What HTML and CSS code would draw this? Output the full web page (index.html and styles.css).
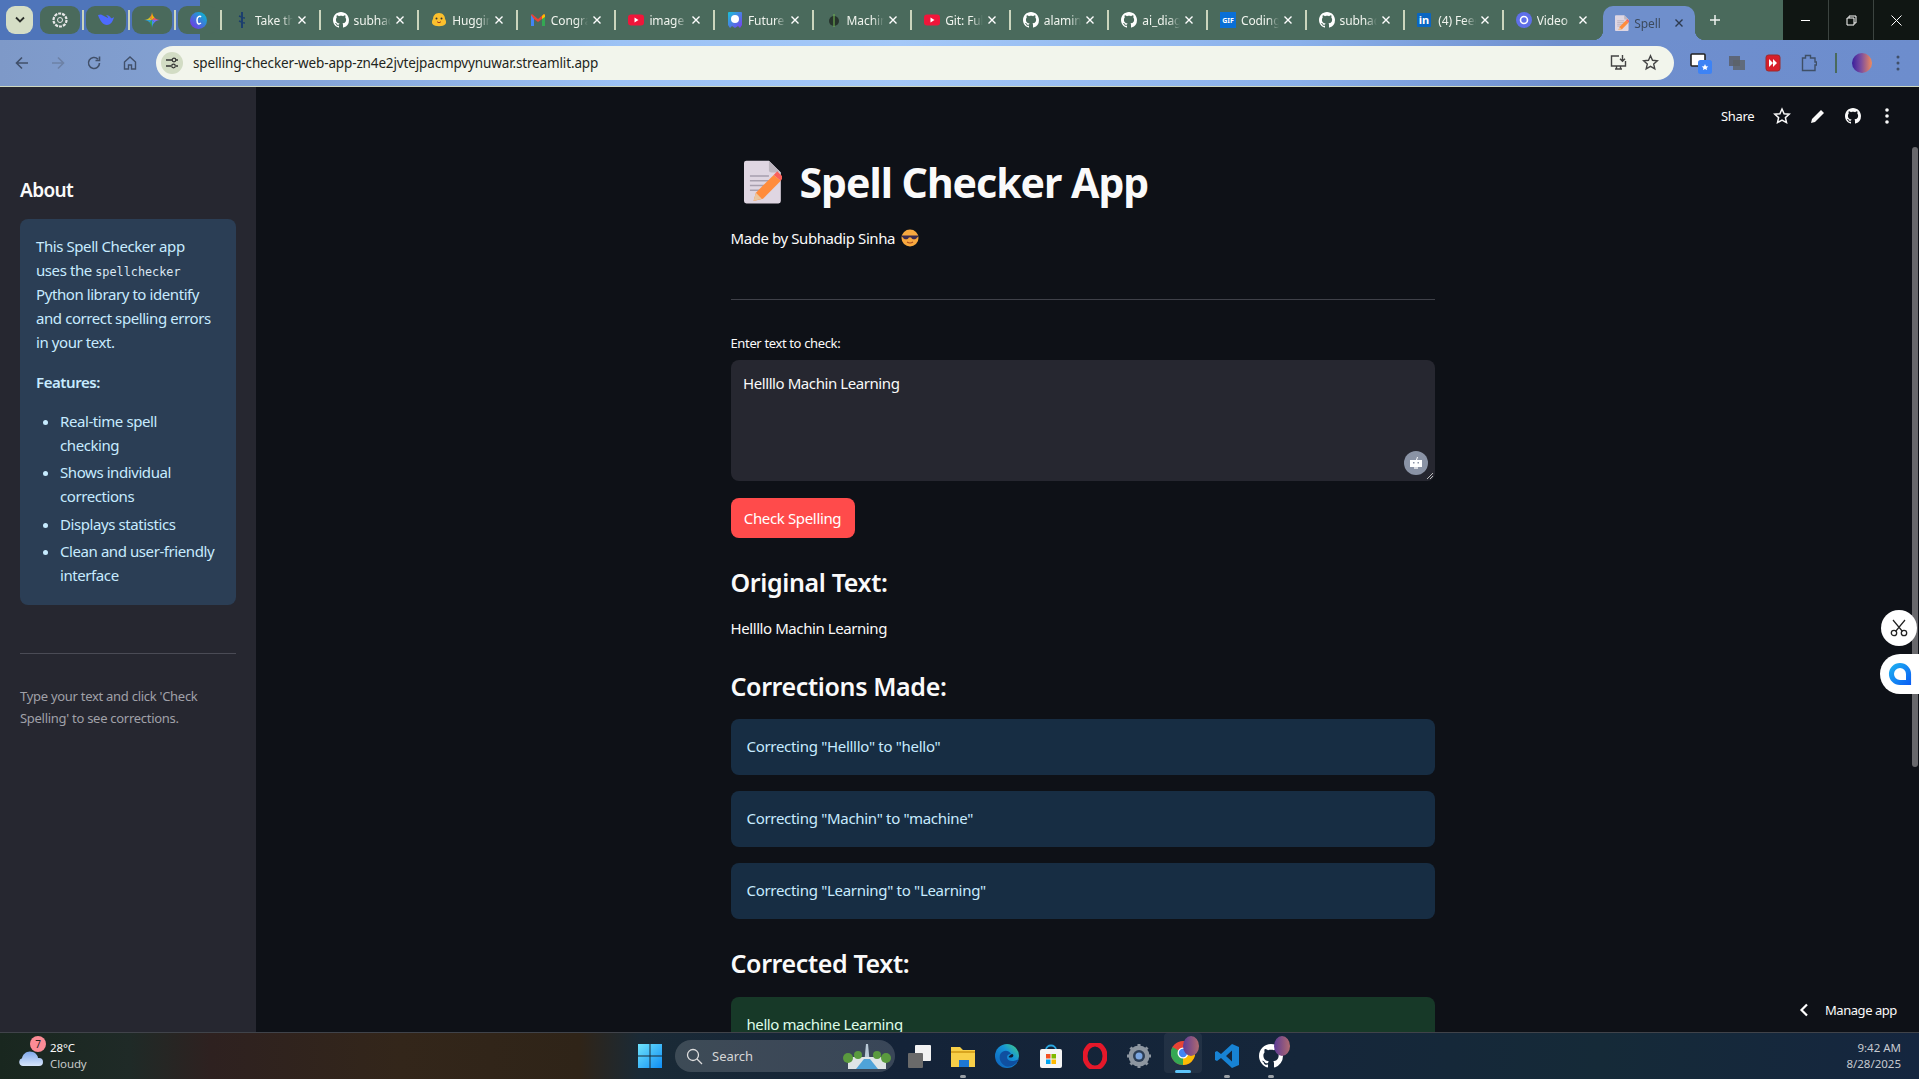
FILE: index.html
```html
<!DOCTYPE html>
<html lang="en">
<head>
<meta charset="utf-8">
<title>Spell Checker App</title>
<link rel="stylesheet" href="styles.css">
</head>
<body>
<svg class="defs" width="0" height="0" aria-hidden="true">
  <defs>
    <symbol id="gh" viewBox="0 0 16 16"><path fill="currentColor" d="M8 0C3.58 0 0 3.58 0 8c0 3.54 2.29 6.53 5.47 7.59.4.07.55-.17.55-.38 0-.19-.01-.82-.01-1.49-2.01.37-2.53-.49-2.69-.94-.09-.23-.48-.94-.82-1.13-.28-.15-.68-.52-.01-.53.63-.01 1.08.58 1.23.82.72 1.21 1.87.87 2.33.66.07-.52.28-.87.51-1.07-1.78-.2-3.64-.89-3.64-3.95 0-.87.31-1.59.82-2.15-.08-.2-.36-1.02.08-2.12 0 0 .67-.21 2.2.82.64-.18 1.32-.27 2-.27.68 0 1.36.09 2 .27 1.53-1.04 2.2-.82 2.2-.82.44 1.1.16 1.92.08 2.12.51.56.82 1.27.82 2.15 0 3.07-1.87 3.75-3.65 3.95.29.25.54.73.54 1.48 0 1.07-.01 1.93-.01 2.2 0 .21.15.46.55.38A8.013 8.013 0 0016 8c0-4.42-3.58-8-8-8z"/></symbol>
    <symbol id="x" viewBox="0 0 10 10"><path d="M1.5 1.5l7 7M8.5 1.5l-7 7" stroke="currentColor" stroke-width="1.4" fill="none"/></symbol>
    <symbol id="yt" viewBox="0 0 16 16"><rect y="2.5" width="16" height="11" rx="3" fill="#f0163a"/><path d="M6.5 5.5v5l4-2.5z" fill="#fff"/></symbol>
    <symbol id="memo" viewBox="0 0 32 36"><path d="M2 0h19l10 10v24a2 2 0 0 1-2 2H2a2 2 0 0 1-2-2V2a2 2 0 0 1 2-2z" fill="#dfd6e2"/><path d="M21 0l10 10H23a2 2 0 0 1-2-2z" fill="#bdb6c0"/><path d="M5 13h16M5 17h19M5 21h16M5 25h10" stroke="#a79fae" stroke-width="1.3"/><path d="M8 34l2-7 15-15 6 5-15 15z" fill="#ff8c3c"/><path d="M25 12l3-3 5 5-2 3z" fill="#f9605a"/><path d="M8 34l2-7 5 5z" fill="#eac7a0"/></symbol>
    <symbol id="cool" viewBox="0 0 18 18"><circle cx="9" cy="9" r="8.5" fill="#f8a83f"/><path d="M1 6.5h16v1.5l-1 .5c-.4 2.2-5 2.6-5.6.2L9 8.2l-1.4.5C7 11 2.400 10.700 2 8.500l-1-.5z" fill="#3b2a4f"/><path d="M6 13c2 1.400 4 1.400 6 0" stroke="#a54a1f" stroke-width="1.100" fill="none"/></symbol>
  </defs>
</svg>

<header class="chrome">
  <div class="tabstrip">
    <div class="tab-down"><svg width="12" height="8" viewBox="0 0 12 8"><path d="M2 1.500l4 4 4-4" stroke="#2b2f2a" stroke-width="1.800" fill="none"/></svg></div>
    <div class="pin">
      <svg width="16" height="16" viewBox="0 0 16 16"><circle cx="8" cy="8" r="6.500" fill="none" stroke="#e8e8e8" stroke-width="2.200" stroke-dasharray="3 1"/><circle cx="8" cy="8" r="2.500" fill="none" stroke="#e8e8e8"/></svg>
    </div>
    <div class="pin-sep"></div>
    <div class="pin">
      <svg width="18" height="16" viewBox="0 0 18 16"><path d="M1 3c2 6 5 10 9 10 3 0 6-3 7-8-1 1-2 1.500-3 1-1-2-3-3-5-3 1 1 2 2 2 3L4 2.500z" fill="#4d6bfe"/></svg>
    </div>
    <div class="pin-sep"></div>
    <div class="pin">
      <svg width="16" height="16" viewBox="0 0 16 16"><path d="M8 0c.300 2.500 1 4.500 2.500 5.500L8 8z" fill="#f4b400"/><path d="M8 0c-.300 2.500-1 4.500-2.500 5.500L8 8z" fill="#f08a30"/><path d="M16 8c-2.500-.300-4.500-1-5.500-2.500L8 8z" fill="#e8556b"/><path d="M16 8c-2.500.300-4.500 1-5.500 2.500L8 8z" fill="#7a6cf0"/><path d="M8 16c-.300-2.500-1-4.500-2.500-5.500L8 8z" fill="#34a853"/><path d="M8 16c.300-2.500 1-4.500 2.500-5.500L8 8z" fill="#3f8ff0"/><path d="M0 8c2.500-.300 4.500-1 5.500-2.500L8 8z" fill="#cfc22f"/><path d="M0 8c2.500.300 4.500 1 5.500 2.500L8 8z" fill="#2f9fd0"/></svg>
    </div>
    <div class="pin-sep"></div>
    <div class="pin">
      <svg width="17" height="17" viewBox="0 0 17 17"><defs><linearGradient id="can" x1="0" y1="1" x2="1" y2="0"><stop offset="0" stop-color="#7d2ae8"/><stop offset="1" stop-color="#00c4cc"/></linearGradient></defs><circle cx="8.500" cy="8.500" r="8.500" fill="url(#can)"/><path d="M11 5c-1-1.500-4-.500-4 3s1.500 5 4 3" stroke="#fff" stroke-width="1.500" fill="none"/></svg>
    </div>
    <div class="pin-sep pin-sep-end"></div>

    <div class="tab"><svg class="fav" width="16" height="16" viewBox="0 0 16 16"><path d="M8 0v16" stroke="#1c3f6e" stroke-width="2"/><path d="M5 4c3 1 4 2 6 2M5 9c3 1 4 2 6 2" stroke="#1c3f6e" stroke-width="1.500" fill="none"/></svg><span class="tab-title">Take the</span><svg class="tab-x" width="10" height="10"><use href="#x"/></svg></div>
    <div class="tab"><svg class="fav fav-w" width="16" height="16"><use href="#gh"/></svg><span class="tab-title">subhadip</span><svg class="tab-x" width="10" height="10"><use href="#x"/></svg></div>
    <div class="tab"><svg class="fav" width="16" height="16" viewBox="0 0 16 16"><path d="M8 1c4 0 6 3 6 6 1 1 1.500 4 .500 5-2 3-11 3-13 0-1-1-.500-4 .500-5 0-3 2-6 6-6z" fill="#fbc02d"/><circle cx="5.500" cy="6.500" r="1" fill="#333"/><circle cx="10.500" cy="6.500" r="1" fill="#333"/><path d="M6 9.500c1 1.500 3 1.500 4 0" stroke="#a03b20" fill="none"/></svg><span class="tab-title">Hugging</span><svg class="tab-x" width="10" height="10"><use href="#x"/></svg></div>
    <div class="tab"><svg class="fav" width="16" height="16" viewBox="0 0 16 16"><path d="M1 3v11h3V7l4 3 4-3v7h3V3l-1-1-6 5-6-5z" fill="#ea4335"/><path d="M1 3v11h3V7z" fill="#4285f4"/><path d="M15 3v11h-3V7z" fill="#34a853"/><path d="M14 2l1 1v2l-3 2V4z" fill="#fbbc04"/></svg><span class="tab-title">Congrat</span><svg class="tab-x" width="10" height="10"><use href="#x"/></svg></div>
    <div class="tab"><svg class="fav" width="16" height="16"><use href="#yt"/></svg><span class="tab-title">image</span><svg class="tab-x" width="10" height="10"><use href="#x"/></svg></div>
    <div class="tab"><svg class="fav" width="16" height="16" viewBox="0 0 16 16"><defs><linearGradient id="fut" x1="0" y1="0" x2="1" y2="1"><stop offset="0" stop-color="#19c3d8"/><stop offset="1" stop-color="#7b3bf0"/></linearGradient></defs><path d="M2 0h12a1 1 0 0 1 1 1v12l-2 3-2-2-3 2-3-2-2 2-2-3V1a1 1 0 0 1 1-1z" fill="url(#fut)"/><circle cx="8" cy="7" r="4" fill="#fff"/></svg><span class="tab-title">Future</span><svg class="tab-x" width="10" height="10"><use href="#x"/></svg></div>
    <div class="tab"><svg class="fav" width="16" height="16" viewBox="0 0 16 16"><circle cx="8" cy="9" r="5" fill="#26332c"/><path d="M8 2v13" stroke="#6aa84f" stroke-width="1.200"/></svg><span class="tab-title">Machine</span><svg class="tab-x" width="10" height="10"><use href="#x"/></svg></div>
    <div class="tab"><svg class="fav" width="16" height="16"><use href="#yt"/></svg><span class="tab-title">Git: Full</span><svg class="tab-x" width="10" height="10"><use href="#x"/></svg></div>
    <div class="tab"><svg class="fav fav-w" width="16" height="16"><use href="#gh"/></svg><span class="tab-title">alamin</span><svg class="tab-x" width="10" height="10"><use href="#x"/></svg></div>
    <div class="tab"><svg class="fav fav-w" width="16" height="16"><use href="#gh"/></svg><span class="tab-title">ai_diag</span><svg class="tab-x" width="10" height="10"><use href="#x"/></svg></div>
    <div class="tab"><svg class="fav" width="16" height="16" viewBox="0 0 16 16"><rect width="16" height="16" fill="#0a6fd6"/><text x="8" y="11" text-anchor="middle" class="gif-text">GIF</text></svg><span class="tab-title">Coding</span><svg class="tab-x" width="10" height="10"><use href="#x"/></svg></div>
    <div class="tab"><svg class="fav fav-w" width="16" height="16"><use href="#gh"/></svg><span class="tab-title">subhadip</span><svg class="tab-x" width="10" height="10"><use href="#x"/></svg></div>
    <div class="tab"><svg class="fav" width="16" height="16" viewBox="0 0 16 16"><rect width="14" height="14" y="1" fill="#0a66c2" rx="1"/><text x="7" y="12" text-anchor="middle" class="in-text">in</text></svg><span class="tab-title">(4) Feed</span><svg class="tab-x" width="10" height="10"><use href="#x"/></svg></div>
    <div class="tab tab-nosep"><svg class="fav" width="16" height="16" viewBox="0 0 16 16"><circle cx="8" cy="8" r="8" fill="#5f6fe8"/><circle cx="8" cy="8" r="3.500" fill="none" stroke="#fff" stroke-width="1.600"/></svg><span class="tab-title">Video</span><svg class="tab-x" width="10" height="10"><use href="#x"/></svg></div>
    <div class="tab tab-active"><svg class="fav" width="14" height="16"><use href="#memo"/></svg><span class="tab-title">Spell</span><svg class="tab-x" width="10" height="10"><use href="#x"/></svg></div>
    <div class="tab-new"><svg width="12" height="12" viewBox="0 0 12 12"><path d="M6 1v10M1 6h10" stroke="#eef2ee" stroke-width="1.500"/></svg></div>
    <div class="win">
      <div class="win-btn"><svg width="11" height="11" viewBox="0 0 11 11"><path d="M1 5.500h9" stroke="#fff"/></svg></div>
      <div class="win-btn"><svg width="11" height="11" viewBox="0 0 11 11"><path d="M1 3h7v7H1zM3 3V1h7v7H8" stroke="#fff" fill="none"/></svg></div>
      <div class="win-btn"><svg width="11" height="11" viewBox="0 0 11 11"><path d="M.5.500l10 10M10.500.500l-10 10" stroke="#fff"/></svg></div>
    </div>
  </div>
  <div class="toolbar">
    <div class="nav">
      <svg width="16" height="16" viewBox="0 0 16 16"><path d="M14 8H2.500M8 2.500L2.500 8 8 13.500" stroke="#41506a" stroke-width="1.600" fill="none"/></svg>
      <svg width="16" height="16" viewBox="0 0 16 16"><path d="M2 8h11.500M8 2.500L13.500 8 8 13.500" stroke="#6d82a6" stroke-width="1.600" fill="none"/></svg>
      <svg width="16" height="16" viewBox="0 0 16 16"><path d="M13.500 8a5.500 5.500 0 1 1-1.600-3.900M13.500 1.500v4h-4" stroke="#41506a" stroke-width="1.600" fill="none"/></svg>
      <svg width="16" height="16" viewBox="0 0 16 16"><path d="M2.500 7L8 2l5.500 5v7h-4v-4h-3v4h-4z" stroke="#41506a" stroke-width="1.400" fill="none"/></svg>
    </div>
    <div class="omnibox">
      <div class="site"><svg width="14" height="14" viewBox="0 0 14 14"><path d="M1 4h6M11 10h2M1 10h5M11 4h2" stroke="#333" stroke-width="1.300"/><circle cx="9" cy="4" r="1.800" fill="none" stroke="#333" stroke-width="1.200"/><circle cx="8.500" cy="10" r="1.800" fill="none" stroke="#333" stroke-width="1.200"/></svg></div>
      <span class="url">spelling-checker-web-app-zn4e2jvtejpacmpvynuwar.streamlit.app</span>
      <div class="omni-actions">
        <svg width="17" height="17" viewBox="0 0 17 17"><path d="M9 2H1.500v10h14V7M5 15h7M6.500 12v3M10.500 12v3M12.500 1v6M10 4.800l2.500 2.500L15 4.800" stroke="#444" stroke-width="1.400" fill="none"/></svg>
        <svg width="17" height="17" viewBox="0 0 17 17"><path d="M8.500 1.800l2 4.500 4.900.5-3.700 3.300 1.100 4.800-4.300-2.500-4.300 2.500 1.100-4.800L1.600 6.800l4.900-.5z" stroke="#444" stroke-width="1.400" fill="none"/></svg>
      </div>
    </div>
    <div class="exts">
      <div class="ext"><svg width="22" height="22" viewBox="0 0 22 22"><rect x="1" y="2" width="14" height="12" rx="1" fill="#fff" stroke="#222" stroke-width="1.600"/><rect x="8" y="8" width="14" height="14" rx="2.500" fill="#3d83f5"/><path d="M15 12l1 2.200 2.300.2-1.700 1.500.5 2.200-2.100-1.200-2.100 1.200.5-2.200-1.700-1.500 2.300-.2z" fill="#fff"/></svg></div>
      <div class="ext"><svg width="18" height="18" viewBox="0 0 18 18"><rect x="1" y="2" width="11" height="10" fill="#555" opacity=".7"/><rect x="5" y="6" width="12" height="10" fill="#5d6368" opacity=".8"/></svg></div>
      <div class="ext"><svg width="16" height="18" viewBox="0 0 16 18"><rect x="1" y="1" width="14" height="16" rx="2.500" fill="#d81e2a" stroke="#9c2a2a"/><path d="M4 5v8l4-4zM8 5v8l4-4z" fill="#fff"/></svg></div>
      <div class="ext"><svg width="16" height="18" viewBox="0 0 16 18"><path d="M1.500 4h3V1.500h5V4h4.500v4h1.500v3H14v5.500H1.500z" stroke="#3f4f66" stroke-width="1.400" fill="none"/></svg></div>
      <div class="ext-sep"></div>
      <div class="avatar"></div>
      <svg class="menu-dots" width="4" height="16" viewBox="0 0 4 16"><circle cx="2" cy="2" r="1.500" fill="#404f68"/><circle cx="2" cy="8" r="1.500" fill="#404f68"/><circle cx="2" cy="14" r="1.500" fill="#404f68"/></svg>
    </div>
  </div>
</header>

<div class="app">
  <aside class="sidebar">
    <h2 class="side-title">About</h2>
    <div class="side-info">
      <p class="side-p">This Spell Checker app uses the <code class="mono">spellchecker</code> Python library to identify and correct spelling errors in your text.</p>
      <p class="side-feat"><strong>Features:</strong></p>
      <ul class="side-list">
        <li>Real-time spell checking</li>
        <li>Shows individual corrections</li>
        <li>Displays statistics</li>
        <li>Clean and user-friendly interface</li>
      </ul>
    </div>
    <hr class="side-rule">
    <p class="side-note">Type your text and click 'Check Spelling' to see corrections.</p>
  </aside>
  <main class="main">
    <div class="column">
      <h1 class="title"><svg class="title-icon" width="38" height="44"><use href="#memo"/></svg><span>Spell Checker App</span></h1>
      <p class="byline">Made by Subhadip Sinha <svg class="byline-emoji" width="18" height="18"><use href="#cool"/></svg></p>
      <hr class="rule">
      <label class="field-label">Enter text to check:</label>
      <div class="textarea">
        <span>Hellllo Machin Learning</span>
        <div class="bot"><svg width="14" height="14" viewBox="0 0 14 14"><path d="M7.500 4l1-3" stroke="#fff"/><rect x="1" y="4" width="12" height="7" fill="#fff"/><rect x="4" y="6" width="1.500" height="1.500" fill="#8a93a5"/><rect x="8.500" y="6" width="1.500" height="1.500" fill="#8a93a5"/><rect x="5" y="11" width="4" height="2" fill="#d6d9df"/></svg></div>
        <svg class="grip" width="8" height="8" viewBox="0 0 8 8"><path d="M1 7l6-6M4 7l3-3" stroke="#bbb"/></svg>
      </div>
      <button class="btn">Check Spelling</button>
      <h2 class="sub sub-first">Original Text:</h2>
      <p class="plain">Hellllo Machin Learning</p>
      <h2 class="sub sub-two">Corrections Made:</h2>
      <div class="alerts">
        <div class="alert">Correcting "Hellllo" to "hello"</div>
        <div class="alert">Correcting "Machin" to "machine"</div>
        <div class="alert">Correcting "Learning" to "Learning"</div>
      </div>
      <h2 class="sub sub-three">Corrected Text:</h2>
      <div class="success">hello machine Learning</div>
    </div>
  </main>
  <div class="app-head">
    <span class="share">Share</span>
    <svg width="18" height="18" viewBox="0 0 18 18"><path d="M9 2l2.100 4.700 5.100.5-3.800 3.400 1.100 5L9 13l-4.500 2.600 1.100-5L1.800 7.200l5.100-.5z" stroke="#fafafa" stroke-width="1.500" fill="none"/></svg>
    <svg width="16" height="16" viewBox="0 0 16 16"><path d="M2 11l9-9 3 3-9 9-4 1z" fill="#fafafa"/></svg>
    <svg class="head-gh" width="16" height="16"><use href="#gh"/></svg>
    <svg class="head-dots" width="4" height="16" viewBox="0 0 4 16"><circle cx="2" cy="2" r="1.800" fill="#fafafa"/><circle cx="2" cy="8" r="1.800" fill="#fafafa"/><circle cx="2" cy="14" r="1.800" fill="#fafafa"/></svg>
  </div>
  <div class="scroll-thumb"></div>
  <div class="float-scissors"><svg width="18" height="18" viewBox="0 0 18 18"><path d="M3 1l9.500 11.500M15 1L5.500 12.500" stroke="#222" stroke-width="1.200"/><circle cx="4" cy="14" r="2.700" fill="none" stroke="#222" stroke-width="1.300"/><circle cx="14" cy="14" r="2.700" fill="none" stroke="#222" stroke-width="1.300"/></svg></div>
  <div class="float-chat"><svg width="24" height="24" viewBox="0 0 26 26"><defs><linearGradient id="chat" x1="0" y1="0" x2="1" y2="1"><stop offset="0" stop-color="#1fb6f0"/><stop offset="1" stop-color="#0a5cf5"/></linearGradient></defs><path d="M13 1a12 12 0 1 0 0 24h12V13A12 12 0 0 0 13 1zm0 5.500a6.500 6.500 0 0 1 6.500 6.500v6.500H13a6.500 6.500 0 0 1 0-13z" fill="url(#chat)"/></svg></div>
  <div class="manage"><svg width="10" height="14" viewBox="0 0 10 14"><path d="M8 1.500L2.500 7 8 12.500" stroke="#fff" stroke-width="2.200" fill="none"/></svg><span>Manage app</span></div>
</div>

<footer class="taskbar">
  <div class="weather">
    <div class="weather-icon">
      <svg width="24" height="20" viewBox="0 0 24 20"><defs><linearGradient id="cl" x1="0" y1="0" x2="0" y2="1"><stop offset="0" stop-color="#7fa7ea"/><stop offset="1" stop-color="#d8e6fb"/></linearGradient></defs><path d="M4 19a4 4 0 0 1-1-7.800C4 6 9 3 14 5c3 1 5 4 5 6h1a4 4 0 0 1 0 8z" fill="url(#cl)"/></svg>
      <span class="badge">7</span>
    </div>
    <div class="weather-text"><span>28°C</span><span class="weather-sub">Cloudy</span></div>
  </div>
  <div class="task-center">
    <svg class="win-logo" width="24" height="24" viewBox="0 0 24 24"><defs><linearGradient id="wl" x1="0" y1="0" x2="1" y2="1"><stop offset="0" stop-color="#6fe3fb"/><stop offset="1" stop-color="#0f8ef5"/></linearGradient></defs><path d="M0 0h11.500v11.500H0zM12.500 0H24v11.500H12.500zM0 12.500h11.500V24H0zM12.500 12.500H24V24H12.500z" fill="url(#wl)"/></svg>
    <div class="search">
      <svg width="17" height="17" viewBox="0 0 17 17"><circle cx="7" cy="7" r="5.500" stroke="#ddd" stroke-width="1.300" fill="none"/><path d="M11 11l5 5" stroke="#ddd" stroke-width="1.300"/></svg>
      <span>Search</span>
      <svg class="search-art" width="50" height="30" viewBox="0 0 50 30"><path d="M22 24l2-21h2l2 21z" fill="#b9c9d6"/><rect x="6" y="16" width="38" height="12" fill="#dfe4e6"/><path d="M14 28l8-10h6l8 10z" fill="#4fa3d9"/><circle cx="6" cy="17" r="5" fill="#5a9a3e"/><circle cx="16" cy="14" r="4" fill="#5a9a3e"/><circle cx="35" cy="14" r="4" fill="#5a9a3e"/><circle cx="44" cy="17" r="5" fill="#5a9a3e"/></svg>
    </div>
    <div class="apps">
      <div class="app-i"><svg width="24" height="24" viewBox="0 0 24 24"><rect x="8" y="1" width="16" height="16" rx="1" fill="#f2f2f2"/><rect x="1" y="9" width="15" height="15" rx="1" fill="#6a6a6a"/></svg></div>
      <div class="app-i app-run"><svg width="26" height="24" viewBox="0 0 26 24"><path d="M1 3h9l3 3h12v17H1z" fill="#f8cf48"/><rect x="1" y="7" width="24" height="2" fill="#d9a520"/><rect x="9" y="16" width="10" height="7" fill="#1d76d2"/></svg></div>
      <div class="app-i"><svg width="24" height="24" viewBox="0 0 24 24"><defs><linearGradient id="ed" x1="0" y1="1" x2="1" y2="0"><stop offset="0" stop-color="#0d5db8"/><stop offset=".6" stop-color="#1593d8"/><stop offset="1" stop-color="#46d47e"/></linearGradient></defs><circle cx="12" cy="12" r="12" fill="url(#ed)"/><path d="M24 14c-1 2-4 3-7 3-3 0-5-1.500-5-4 0-2 2-3 4-3-2-3-5-4-8-2.500C5 9 4 12 5 16c1 3 3 5 6 6.500 6 1 12-3 13-8.500z" fill="#0f4fa0"/><path d="M17.500 10c1.500 1 1 3-1 3.500-1 .200-2 0-3-.500 1-1.500 2.500-3 4-3z" fill="#0e1c30"/></svg></div>
      <div class="app-i"><svg width="22" height="24" viewBox="0 0 22 24"><path d="M6 6c0-6 10-6 10 0" stroke="#2aa7e0" stroke-width="1.800" fill="none"/><rect x="0" y="5" width="22" height="19" rx="2" fill="#f5f5f5"/><rect x="6" y="10" width="4.500" height="4.500" fill="#f25022"/><rect x="11.500" y="10" width="4.500" height="4.500" fill="#7fba00"/><rect x="6" y="15.500" width="4.500" height="4.500" fill="#00a4ef"/><rect x="11.500" y="15.500" width="4.500" height="4.500" fill="#ffb900"/></svg></div>
      <div class="app-i"><svg width="24" height="26" viewBox="0 0 24 26"><ellipse cx="12" cy="13" rx="10" ry="12" fill="none" stroke="#e5182a" stroke-width="5"/></svg></div>
      <div class="app-i"><svg width="24" height="24" viewBox="0 0 24 24"><circle cx="12" cy="12" r="8" fill="none" stroke="#8d96a0" stroke-width="5"/><path d="M12 0v24M0 12h24M3.500 3.500l17 17M20.500 3.500l-17 17" stroke="#8d96a0" stroke-width="3"/><circle cx="12" cy="12" r="6" fill="#2c3e55"/><circle cx="12" cy="12" r="3.500" fill="#7aa5e0"/></svg></div>
      <div class="app-i app-chrome">
        <svg width="24" height="24" viewBox="0 0 24 24"><circle cx="12" cy="12" r="12" fill="#e84335"/><path d="M12 12L1.500 6A12 12 0 0 0 12 24z" fill="#34a853"/><path d="M12 12l10.500-6A12 12 0 0 1 12 24z" fill="#fbbc04"/><circle cx="12" cy="12" r="5.500" fill="#fff"/><circle cx="12" cy="12" r="4.200" fill="#4285f4"/></svg>
        <span class="app-badge"></span><span class="app-bar"></span>
      </div>
      <div class="app-i app-run"><svg width="24" height="24" viewBox="0 0 24 24"><path d="M17 0l7 3v18l-7 3L6 14l-4 3-2-1V8l2-1 4 3zM17 6.500L11 12l6 5.500z" fill="#1783d4"/></svg></div>
      <div class="app-i app-run app-gh"><svg width="24" height="24"><use href="#gh"/></svg><span class="app-badge"></span></div>
    </div>
  </div>
  <div class="clock"><span>9:42 AM</span><span>8/28/2025</span></div>
</footer>
</body>
</html>
```

FILE: styles.css
```css
* { box-sizing: border-box; }
html, body { margin: 0; padding: 0; height: 100%; }
body {
  width: 1919px; height: 1079px; overflow: hidden;
  display: flex; flex-direction: column;
  background: #0e1117; color: #fafafa;
  font-family: "Noto Sans", "Liberation Sans", sans-serif;
}
.defs { position: absolute; }
p, h1, h2, ul { margin: 0; padding: 0; }

/* browser chrome */
.chrome { flex: none; height: 87px; }
.tabstrip {
  height: 40px; display: flex; align-items: center; padding-left: 6px;
  background: linear-gradient(90deg, #4f75ba 200px, #4a6a5c 200px);
  position: relative;
}
.tab-down { width: 27px; height: 28px; border-radius: 9px; background: #d5dec6; display: flex; align-items: center; justify-content: center; margin-right: 7px; flex: none; }
.pin { width: 40px; height: 28px; border-radius: 9px; background: #4a6a5c; display: flex; align-items: center; justify-content: center; flex: none; }
.pin-sep { width: 2px; height: 20px; background: #cbd5bd; margin: 0 2px; flex: none; }
.pin-sep-end { margin-right: 0; }
.tab {
  width: 98.6px; height: 34px; flex: none; display: flex; align-items: center; padding: 0 9px 0 12px;
  position: relative; font-size: 12px; color: #f0f4ee;
}
.tab::after { content: ""; position: absolute; right: 0; top: 7px; height: 20px; width: 2px; background: #cbd5bd; }
.tab-nosep::after { display: none; }
.fav { flex: none; margin-right: 5px; }
.fav-w { color: #fff; }
.tab-title {
  flex: 1; overflow: hidden; white-space: nowrap; letter-spacing: -.1px;
  -webkit-mask-image: linear-gradient(90deg, #000 70%, transparent);
  mask-image: linear-gradient(90deg, #000 70%, transparent);
}
.tab-x { flex: none; color: #fff; margin: 0 5px 0 4px; }
.tab-active {
  width: 92px; height: 34px; margin-top: 6px; margin-left: 1px; border-radius: 10px 10px 0 0;
  background: #6f8fcc; color: #3c4a5e; padding: 0 9px 0 12px;
}
.tab-active::before, .tab-active::after {
  content: ""; display: block; position: absolute; bottom: 0; top: auto; width: 10px; height: 10px; background: none;
}
.tab-active::before { left: -10px; background: radial-gradient(circle at 0 0, transparent 10px, #6f8fcc 10.5px); }
.tab-active::after { right: -10px; background: radial-gradient(circle at 100% 0, transparent 10px, #6f8fcc 10.5px); }
.tab-active .tab-x { color: #2d3a4f; margin-right: 2px; }
.tab-new { width: 32px; height: 28px; display: flex; align-items: center; justify-content: center; margin-left: 4px; flex: none; }
.gif-text { font: 700 7px "Noto Sans", sans-serif; fill: #fff; }
.in-text { font: 700 11px "Noto Sans", sans-serif; fill: #fff; }
.win { margin-left: auto; height: 40px; width: 136px; display: flex; background: #101613; flex: none; }
.win-btn { flex: 1; display: flex; align-items: center; justify-content: center; border-left: 1px solid #3c4440; }
.win-btn:first-child { border-left: 0; }

.toolbar {
  height: 47px; display: flex; align-items: center;
  padding-bottom: 1px;
  background: linear-gradient(90deg, #7e99c8 0, #84a4d8 300px, #9cc2f5 620px, #a4c8f8 900px, #8ab0ea 1300px, #6f8fce 1560px, #6d8dcd 1919px);
  border-bottom: 1px solid #cfd8bf;
}
.nav { width: 156px; flex: none; display: flex; align-items: center; gap: 20px; padding-left: 14px; }
.omnibox {
  width: 1518px; height: 34px; border-radius: 17px; background: #f2f5ec; flex: none;
  display: flex; align-items: center; padding: 0 15px 0 5px; color: #1e2520;
}
.site { width: 22px; height: 22px; border-radius: 50%; background: #d2dcc4; display: flex; align-items: center; justify-content: center; margin-right: 10px; }
.url { font-size: 13.5px; letter-spacing: -.14px; white-space: nowrap; }
.omni-actions { margin-left: auto; display: flex; gap: 15px; }
.exts { flex: 1; display: flex; align-items: center; padding-left: 9px; }
.ext { width: 36px; display: flex; justify-content: center; }
.ext-sep { width: 2px; height: 20px; background: #4a6a5c; margin: 0 8px; }
.avatar { width: 20px; height: 20px; border-radius: 50%; background: linear-gradient(90deg, #3a1f9c 0, #7a4da0 45%, #f08a5c 100%); margin-left: 7px; }
.menu-dots { margin-left: 24px; }

/* app */
.app { flex: none; height: 945px; display: flex; position: relative; overflow: hidden; }
.sidebar { width: 256px; flex: none; background: #262730; padding: 90px 20px 0; font-size: 16px; }
.side-title { font-size: 19px; font-weight: 600; line-height: 26px; color: #fafafa; letter-spacing: -.6px; }
.side-info {
  margin-top: 16px; height: 386px; border-radius: 8px; padding: 15px 20px 16px 16px;
  background: #2b3e55; color: #c7ebff; font-size: 15px; line-height: 24px; letter-spacing: -.42px;
}
.mono { font-family: "DejaVu Sans Mono", monospace; font-size: 11.8px; letter-spacing: 0; line-height: 1; color: #dbe7f3; }
.side-feat { margin-top: 16px; }
.side-feat strong { font-weight: 600; }
.side-list { margin-top: 15px; padding-left: 24px; }
.side-list li { margin-bottom: 3.4px; }
.side-rule { border: 0; border-top: 1px solid #4a4b55; margin: 48px 0 0; }
.side-note { margin-top: 31px; font-size: 13px; line-height: 22px; color: #a0a1a8; letter-spacing: -.28px; }

.main { flex: 1; display: flex; justify-content: center; padding-right: 10px; overflow: hidden; }
.column { width: 704px; }
.title { display: flex; align-items: center; height: 86px; margin-top: 52px; font-size: 41px; font-weight: 700; color: #fafafa; letter-spacing: -1px; line-height: 86px; }
.title-icon { margin: 0 18px 0 13px; }
.byline { font-size: 15px; line-height: 28px; letter-spacing: -.42px; margin-top: -1px; display: flex; align-items: center; }
.byline-emoji { margin-left: 6px; }
.rule { border: 0; border-top: 1px solid #3f4149; margin: 47px 0 0; }
.field-label { display: block; font-size: 13px; line-height: 20px; margin-top: 33px; letter-spacing: -.36px; }
.textarea {
  height: 121px; margin-top: 7px; border-radius: 8px; background: #262730; padding: 12px 12.500px;
  font-size: 15px; line-height: 22px; letter-spacing: -.42px; position: relative;
}
.bot { position: absolute; right: 7px; bottom: 6px; width: 24px; height: 24px; border-radius: 50%; background: #8a93a5; display: flex; align-items: center; justify-content: center; }
.grip { position: absolute; right: 1px; bottom: 1px; }
.btn {
  display: block; margin-top: 17px; width: 124px; height: 40px; border: 0; border-radius: 8px; padding: 0;
  background: #ff4b4b; color: #fff; font: 15px/40px "Noto Sans", sans-serif; letter-spacing: -.35px;
}
.sub { font-size: 25px; font-weight: 600; line-height: 40px; letter-spacing: -.37px; color: #fafafa; }
.sub-first { margin-top: 24px; }
.plain { font-size: 15px; line-height: 28px; letter-spacing: -.42px; margin-top: 12px; }
.sub-two { margin-top: 24px; }
.alerts { margin-top: 13px; display: flex; flex-direction: column; gap: 16px; }
.alert { height: 56px; border-radius: 8px; padding: 0 16px; background: #172d43; color: #c7ebff; font-size: 15px; line-height: 54px; letter-spacing: -.3px; }
.sub-three { margin-top: 24px; }
.success { margin-top: 14px; height: 56px; border-radius: 8px; padding: 0 16px; background: #173928; color: #dffde9; font-size: 15px; line-height: 54px; letter-spacing: -.42px; }

/* overlays */
.app-head { position: absolute; top: 17px; left: 1721px; display: flex; align-items: center; gap: 19px; height: 24px; }
.share { font-size: 13px; letter-spacing: -.36px; }
.head-gh { color: #fafafa; }
.head-dots { margin-left: 5px; }
.scroll-thumb { position: absolute; top: 60px; right: 1px; width: 6px; height: 620px; border-radius: 3px; background: #68686c; }
.float-scissors { position: absolute; top: 523px; right: 2px; width: 36px; height: 36px; border-radius: 50%; background: #fff; display: flex; align-items: center; justify-content: center; }
.float-chat { position: absolute; top: 567px; right: 0; width: 39px; height: 40px; border-radius: 20px 0 0 20px; background: #fff; display: flex; align-items: center; padding-left: 8px; }
.manage { position: absolute; left: 1799px; top: 913px; display: flex; align-items: center; gap: 16px; font-size: 13px; letter-spacing: -.45px; line-height: 20px; }

/* taskbar */
.taskbar {
  flex: none; height: 47px; display: flex; align-items: center; padding-left: 19px; position: relative;
  border-top: 1px solid #40434a;
  background: linear-gradient(90deg, #19271f 0, #1f2a27 130px, #2e2120 210px, #33261a 400px, #2f2418 580px, #1a2a36 640px, #142338 900px, #15263a 1300px, #152a38 1600px, #15263f 1919px);
}
.weather { display: flex; align-items: center; gap: 7px; width: 200px; }
.weather-icon { position: relative; width: 24px; height: 22px; padding-top: 2px; }
.badge { position: absolute; top: -9px; left: 11px; width: 16px; height: 16px; border-radius: 50%; background: #fb8c96; color: #222; font-size: 10px; line-height: 16px; text-align: center; }
.weather-text { display: flex; flex-direction: column; font-size: 11.5px; line-height: 16px; letter-spacing: -.1px; }
.weather-sub { color: #c6c9c9; }
.task-center { position: absolute; left: 638px; top: 0; height: 46px; display: flex; align-items: center; }
.win-logo { flex: none; }
.search {
  width: 220px; height: 32px; margin-left: 13px; border-radius: 16px; background: rgba(255,255,255,.16);
  display: flex; align-items: center; padding-left: 11px; gap: 9px; font-size: 13px; color: #d6d6d6; position: relative;
}
.search-art { position: absolute; right: 3px; top: 1px; }
.apps { display: flex; margin-left: 2px; }
.app-i { width: 44px; height: 46px; display: flex; align-items: center; justify-content: center; position: relative; }
.app-run::after { content: ""; position: absolute; bottom: 1px; left: 19px; width: 6px; height: 3px; border-radius: 2px; background: #9aa0a6; }
.app-chrome { background: rgba(255,255,255,.06); border-radius: 4px; height: 40px; width: 38px; margin: 0 3px; }
.app-bar { position: absolute; bottom: 0; left: 11px; width: 16px; height: 3px; border-radius: 2px; background: #5cc4fa; }
.app-badge { position: absolute; top: 3px; right: 3px; width: 16px; height: 20px; border-radius: 50%; background: linear-gradient(90deg, #5c3a96, #b06a70); }
.app-gh { color: #fff; }
.clock { position: absolute; right: 18px; top: 7px; text-align: right; display: flex; flex-direction: column; font-size: 11.5px; line-height: 16px; color: #c6cad0; }
```
